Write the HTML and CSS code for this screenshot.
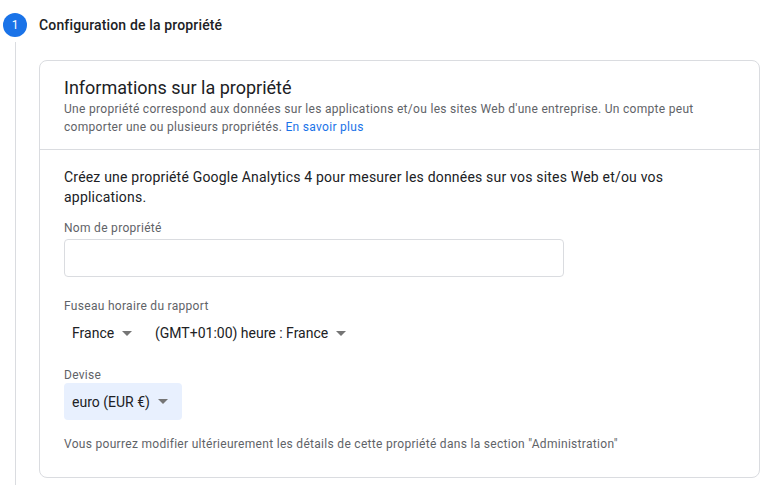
FILE: index.html
```html
<!DOCTYPE html>
<html lang="fr">
<head>
<meta charset="utf-8">
<title>Configuration de la propriété</title>
<link rel="stylesheet" href="styles.css">
</head>
<body>
<div class="step">
  <div class="step-head">
    <div class="step-num">1</div>
    <div class="step-title">Configuration de la propriété</div>
  </div>
  <div class="step-body">
    <div class="card">
      <div class="card-head">
        <div class="card-title">Informations sur la propriété</div>
        <div class="card-sub">Une propriété correspond aux données sur les applications et/ou les sites Web d'une entreprise. Un compte peut comporter une ou plusieurs propriétés. <a class="link" href="#">En savoir plus</a></div>
      </div>
      <div class="card-content">
        <p class="intro">Créez une propriété Google Analytics 4 pour mesurer les données sur vos sites Web et/ou vos applications.</p>
        <div class="label first-label">Nom de propriété</div>
        <div class="input"></div>
        <div class="label tz-label">Fuseau horaire du rapport</div>
        <div class="select-row">
          <div class="select country">France <span class="arrow"></span></div>
          <div class="select tz">(GMT+01:00) heure : France <span class="arrow"></span></div>
        </div>
        <div class="label cur-label">Devise</div>
        <div class="select currency">euro (EUR €) <span class="arrow"></span></div>
        <div class="note">Vous pourrez modifier ultérieurement les détails de cette propriété dans la section "Administration"</div>
      </div>
    </div>
  </div>
</div>
</body>
</html>
```
FILE: styles.css
```css
* { box-sizing: border-box; }
html, body { margin: 0; padding: 0; background: #fff; }
body {
  font-family: Roboto, "Noto Sans", Arial, sans-serif;
  color: #202124;
  width: 768px;
  height: 485px;
  overflow: hidden;
}
.step-head {
  display: flex;
  align-items: center;
  padding: 13px 0 0 3px;
  height: 36px;
}
.step-num {
  width: 24px;
  height: 24px;
  border-radius: 50%;
  background: #1a73e8;
  color: #fff;
  font-size: 12px;
  display: flex;
  align-items: center;
  justify-content: center;
  flex: none;
}
.step-title {
  margin-left: 12px;
  font-size: 14px;
  font-weight: 500;
  color: #202124;
  letter-spacing: 0.15px;
}
.step-body {
  margin: 6px 0 0 15px;
  border-left: 1px solid #dadce0;
  padding: 18px 8px 20px 23px;
}
.card {
  width: 721px;
  border: 1px solid #dadce0;
  border-radius: 8px;
}
.card-head {
  padding: 15px 24px 13px;
  border-bottom: 1px solid #dadce0;
}
.card-title {
  font-size: 18px;
  line-height: 24px;
  color: #202124;
}
.card-sub {
  font-size: 12px;
  line-height: 18px;
  color: #5f6368;
  letter-spacing: 0.3px;
}
.link { color: #1a73e8; text-decoration: none; }
.card-content {
  padding: 17px 24px 25px;
}
.intro {
  margin: 0;
  font-size: 14px;
  line-height: 20px;
  color: #202124;
  width: 650px;
  letter-spacing: 0.2px;
}
.label {
  font-size: 12px;
  line-height: 16px;
  color: #5f6368;
  letter-spacing: 0.3px;
}
.first-label { margin-top: 13px; }
.input {
  margin-top: 3px;
  width: 500px;
  height: 38px;
  border: 1px solid #dadce0;
  border-radius: 4px;
}
.tz-label { margin-top: 21px; }
.select-row {
  display: flex;
  align-items: center;
  height: 36px;
  margin-top: 1px;
}
.select {
  display: inline-flex;
  align-items: center;
  font-size: 14px;
  color: #202124;
  padding: 0 8px;
  height: 36px;
}
.arrow {
  display: inline-block;
  width: 0;
  height: 0;
  border-left: 5px solid transparent;
  border-right: 5px solid transparent;
  border-top: 5px solid #757575;
  margin-left: 8px;
}
.country { width: 83px; }
.cur-label { margin-top: 16px; }
.currency {
  background: #e8f0fe;
  border-radius: 4px;
  height: 37px;
  width: 118px;
  display: flex;
}
.note {
  margin-top: 16px;
  font-size: 12px;
  line-height: 16px;
  color: #5f6368;
  letter-spacing: 0.3px;
}
```
